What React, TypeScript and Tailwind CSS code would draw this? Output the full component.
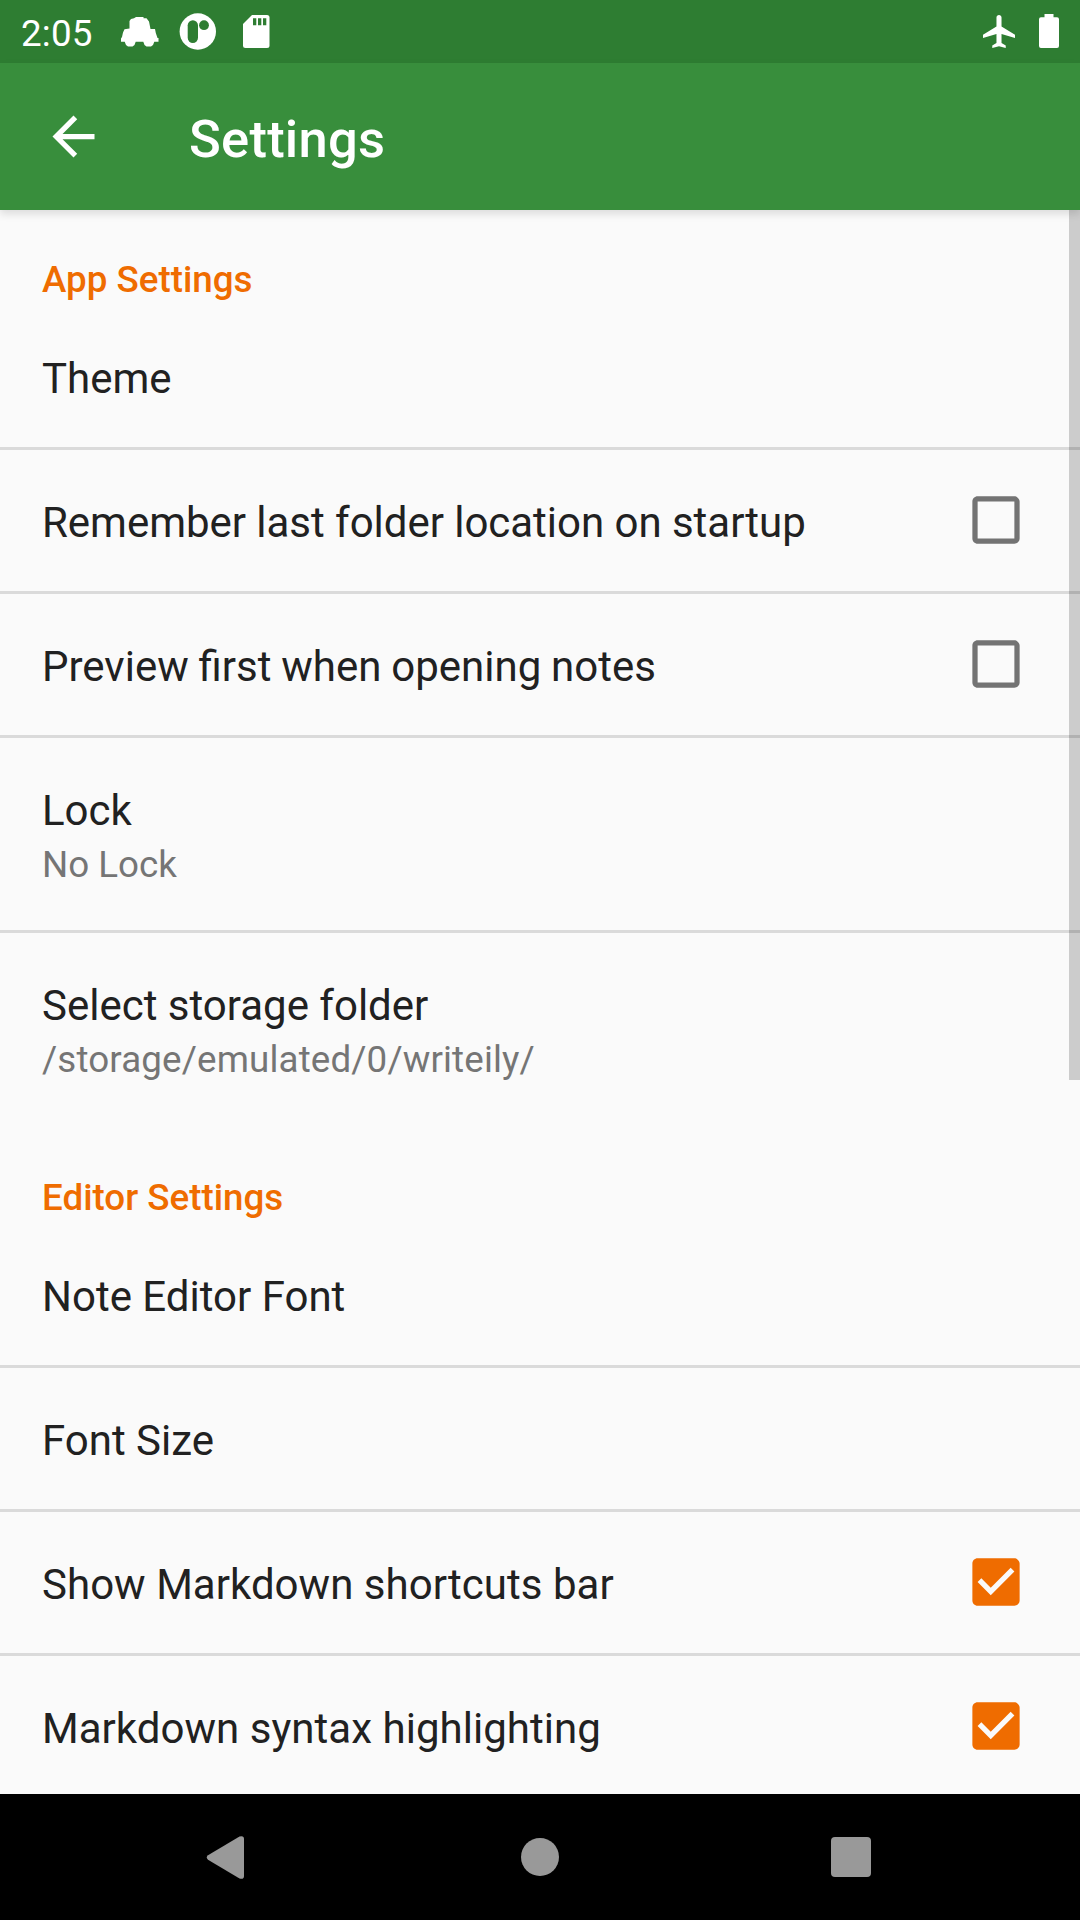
import React from "react";

function Check({ on }: { on: boolean }) {
  return (
    <svg viewBox="-0.19 -0.19 24.38 24.38" className="mb-px size-16 shrink-0" aria-hidden="true">
      {on ? (
        <path fill="#ef6c00" d="M19 3H5c-1.11 0-2 .9-2 2v14c0 1.1.89 2 2 2h14c1.11 0 2-.9 2-2V5c0-1.1-.89-2-2-2zm-9 14l-5-5 1.41-1.41L10 14.17l7.59-7.59L19 8l-9 9z" />
      ) : (
        <path fill="#737373" d="M19 5v14H5V5h14m0-2H5c-1.1 0-2 .9-2 2v14c0 1.1.9 2 2 2h14c1.1 0 2-.9 2-2V5c0-1.1-.9-2-2-2z" />
      )}
    </svg>
  );
}

type RowProps = { title: string; note?: string; check?: boolean; last?: boolean; spacing?: string };

function Row({ title, note, check, last, spacing = "" }: RowProps) {
  return (
    <div className={`flex shrink-0 items-center justify-between border-b-3 pr-[52px] pl-[42px] ${note ? "h-[195px]" : "h-36"} ${last ? "border-transparent" : "border-[#dadada]"}`}>
      <div className={note ? "pt-1.5" : "pt-1"}>
        <div className={`text-[42px] leading-[56px] whitespace-nowrap text-[#212121] ${spacing}`}>{title}</div>
        {note && <div className={`text-[36.75px] leading-[52px] text-[#757575] ${note.length > 10 ? "tracking-[0.14px]" : ""}`}>{note}</div>}
      </div>
      {check !== undefined && <Check on={check} />}
    </div>
  );
}

function Heading({ children }: { children: string }) {
  return <h2 className="h-24 shrink-0 pt-[45px] pl-[42px] text-[36.75px] leading-[50px] font-medium text-[#ef6c00]">{children}</h2>;
}

function StatusBar() {
  return (
    <div className="flex h-[63px] shrink-0 items-start bg-[#2e7d32] pr-[21px] pl-[21px] text-white">
      <span className="w-[100px] pt-3 text-[36.75px] leading-[44px] tracking-[0.2px]">2:05</span>
      <svg viewBox="0 0 38 30" className="mt-[17px] h-[30px] w-[38px]" fill="currentColor" aria-hidden="true">
        <path d="M15 0H22.500V1.300H25.500L28 4.500L29.500 12H34L34.800 16L36.500 21H37.500V24.700H33.300L32 28L30 29.500H25.500L23.500 28L22.300 24.700H14.700L13.500 28L11.500 29.500H7L5 28L3.700 24.700H0V21.500L1 20L2 15.500L3.500 12.300L8.500 11.500V4L10 2L13 1.300Z" />
      </svg>
      <svg viewBox="0 0 37 37" className="mt-[13px] ml-[20px] size-[37px]" aria-hidden="true">
        <circle cx="18.800" cy="18.500" r="18.200" fill="white" />
        <rect x="8.700" y="7.200" width="10.300" height="22.800" rx="5.150" fill="#2e7d32" />
        <circle cx="25" cy="12.200" r="4.900" fill="#2e7d32" />
      </svg>
      <svg viewBox="0 0 27 33" className="mt-[15px] ml-[27px] h-[33px] w-[27px]" aria-hidden="true">
        <path d="M9 0H24Q26.500 0 26.500 2.500V30.500Q26.500 33 24 33H2.500Q0 33 0 30.500V9z" fill="white" />
        <path d="M10 3.300h3.300v7H10zM15 3.300h3.300v7H15zM20 3.300h3.300v7H20z" fill="#2e7d32" />
      </svg>
      <svg viewBox="2.500 2 19 20" preserveAspectRatio="none" className="mt-[15px] ml-auto h-[33px] w-[32px]" fill="currentColor" aria-hidden="true">
        <path d="M21.500 16v-2l-8-5V3.500c0-.83-.67-1.500-1.500-1.500s-1.500.67-1.500 1.500V9l-8 5v2l8-2.500V19l-2.500 1.500V22l4-1 4 1v-1.500L13.500 19v-5.500z" />
      </svg>
      <svg viewBox="0 0 20 34" className="mt-[14px] ml-[24px] h-[34px] w-[20px]" fill="currentColor" aria-hidden="true">
        <path d="M5.500 0h9v3.300H18q2 0 2 2V32q0 2-2 2H2q-2 0-2-2V5.300q0-2 2-2h3.500z" />
      </svg>
    </div>
  );
}

export default function App() {
  return (
    <div className="relative flex h-[1920px] w-[1080px] flex-col overflow-hidden bg-[#fafafa] font-['Roboto',sans-serif]">
      <StatusBar />
      <header className="flex h-[147px] shrink-0 items-center bg-[#388e3c] pl-[42px] text-white shadow-[0_4px_8px_rgba(0,0,0,0.12)]">
        <svg viewBox="0 0 24 24" className="size-[63px]" fill="currentColor" aria-hidden="true">
          <path d="M20 11H7.830l5.590-5.590L12 4l-8 8 8 8 1.410-1.410L7.830 13H20v-2z" />
        </svg>
        <h1 className="pt-[5px] pl-[84px] text-[52.5px] font-medium tracking-[0.25px]">Settings</h1>
      </header>
      <main className="flex h-[1584px] shrink-0 flex-col overflow-hidden">
        <Heading>App Settings</Heading>
        <Row title="Theme" />
        <Row title="Remember last folder location on startup" check={false} spacing="tracking-[-0.03px]" />
        <Row title="Preview first when opening notes" check={false} spacing="[word-spacing:-0.6px]" />
        <Row title="Lock" note="No Lock" />
        <Row title="Select storage folder" note="/storage/emulated/0/writeily/" last />
        <Heading>Editor Settings</Heading>
        <Row title="Note Editor Font" />
        <Row title="Font Size" />
        <Row title="Show Markdown shortcuts bar" check={true} spacing="tracking-[0.03px]" />
        <Row title="Markdown syntax highlighting" check={true} last spacing="tracking-[0.03px]" />
      </main>
      <nav className="grid h-[126px] shrink-0 grid-cols-[450px_180px_450px] items-center bg-black" aria-label="System navigation">
        <svg viewBox="-0.5 0 38 43" className="ml-[206px] h-[43px] w-[38px]" fill="#999" aria-hidden="true">
          <path d="M1.500 19.300 33 .5Q37.500-.8 37.500 3V40Q37.500 43.800 33 42.500L1.500 23.700Q-1 21.500 1.500 19.300z" />
        </svg>
        <div className="size-[38px] justify-self-center rounded-full bg-[#999]" />
        <div className="ml-[201px] size-10 rounded-[4px] bg-[#999]" />
      </nav>
      <div className="absolute top-[210px] right-0 h-[870px] w-[11px] bg-black/[0.184]" />
    </div>
  );
}
